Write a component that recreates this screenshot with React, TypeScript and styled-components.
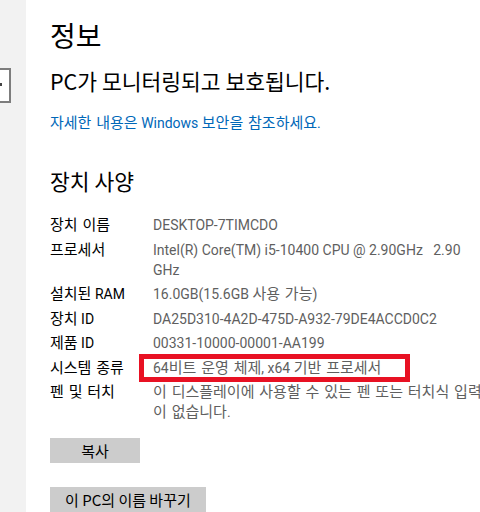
import React from "react";
import styled, { createGlobalStyle } from "styled-components";

const GlobalStyle = createGlobalStyle`
  html, body {
    margin: 0;
    padding: 0;
    background: #ffffff;
    overflow: hidden;
  }
  body {
    font-family: Roboto, "Noto Sans CJK KR", sans-serif;
    color: #000;
  }
`;

const Page = styled.div`
  display: flex;
  width: 560px;
  height: 512px;
`;

const Sidebar = styled.aside`
  flex: 0 0 26px;
  background: #f2f2f2;
  position: relative;
`;

const SearchBox = styled.div`
  position: absolute;
  left: -40px;
  top: 68px;
  width: 47px;
  height: 31px;
  border: 2px solid #7d7d7d;
  background: #ffffff;
`;

const SearchMark = styled.span`
  position: absolute;
  right: 7px;
  top: 13px;
  width: 2px;
  height: 3px;
  background: #444;
`;

const Main = styled.main`
  flex: 1;
  padding: 15px 0 0 24px;
  display: flex;
  flex-direction: column;
  align-items: flex-start;
`;

const Title = styled.h1`
  margin: 0;
  font-family: "Noto Sans CJK KR", sans-serif;
  font-size: 28px;
  font-weight: 400;
  line-height: 40px;
`;

const Status = styled.p`
  margin: 12px 0 0;
  font-family: "Noto Sans CJK KR", sans-serif;
  font-size: 21.5px;
  line-height: 28px;
`;

const Link = styled.a`
  margin-top: 18px;
  font-size: 14px;
  line-height: 20px;
  color: #0067b8;
  text-decoration: none;
`;

const SectionTitle = styled.h2`
  margin: 34px 0 0;
  font-family: "Noto Sans CJK KR", sans-serif;
  font-size: 21.5px;
  font-weight: 400;
  line-height: 28px;
`;

const SpecList = styled.dl`
  margin: 20px 0 0;
  display: grid;
  grid-template-columns: 103px 331px;
  row-gap: 4.5px;
  font-size: 14px;
  line-height: 20px;
`;

const Label = styled.dt`
  margin: 0;
  color: #000;
`;

const Value = styled.dd<{ $highlight?: boolean }>`
  margin: 0;
  color: #5f5f5f;
  white-space: pre-wrap;
  position: relative;
  ${(p) =>
    p.$highlight &&
    `
    &::after {
      content: "";
      position: absolute;
      left: -14px;
      top: -4px;
      width: 271px;
      height: 28px;
      box-sizing: border-box;
      border: 5px solid #e81123;
      pointer-events: none;
    }
  `}
`;

const Ko = styled.span`
  font-family: "Noto Sans CJK KR", sans-serif;
  font-size: 15px;
  line-height: 1;
  word-spacing: 1.5px;
`;

const Button = styled.button<{ $gap: number }>`
  margin-top: ${(p) => p.$gap}px;
  min-width: 90px;
  height: 30px;
  padding: 0 15px;
  border: none;
  background: #cccccc;
  color: #000;
  font-family: "Noto Sans CJK KR", sans-serif;
  font-size: 15px;
  line-height: 20px;
`;

const HANGUL_RUN = /([\uAC00-\uD7A3\u3131-\u318E]+(?: +[\uAC00-\uD7A3\u3131-\u318E]+)*)/;

function Mixed({ text }: { text: string }) {
  const parts = text.split(HANGUL_RUN);
  return (
    <>
      {parts.map((part, i) =>
        i % 2 === 1 ? <Ko key={i}>{part}</Ko> : part ? <React.Fragment key={i}>{part}</React.Fragment> : null
      )}
    </>
  );
}

const specs: { label: string; value: string; highlight?: boolean }[] = [
  { label: "장치 이름", value: "DESKTOP-7TIMCDO" },
  { label: "프로세서", value: "Intel(R) Core(TM) i5-10400 CPU @ 2.90GHz   2.90 GHz" },
  { label: "설치된 RAM", value: "16.0GB(15.6GB 사용 가능)" },
  { label: "장치 ID", value: "DA25D310-4A2D-475D-A932-79DE4ACCD0C2" },
  { label: "제품 ID", value: "00331-10000-00001-AA199" },
  { label: "시스템 종류", value: "64비트 운영 체제, x64 기반 프로세서", highlight: true },
  { label: "펜 및 터치", value: "이 디스플레이에 사용할 수 있는 펜 또는 터치식 입력이 없습니다." },
];

export default function App() {
  return (
    <>
      <GlobalStyle />
      <Page>
        <Sidebar>
          <SearchBox>
            <SearchMark />
          </SearchBox>
        </Sidebar>
        <Main>
          <Title>정보</Title>
          <Status>PC가 모니터링되고 보호됩니다.</Status>
          <Link href="#">
            <Mixed text="자세한 내용은 Windows 보안을 참조하세요." />
          </Link>
          <SectionTitle>장치 사양</SectionTitle>
          <SpecList>
            {specs.map((s) => (
              <React.Fragment key={s.label}>
                <Label>
                  <Mixed text={s.label} />
                </Label>
                <Value $highlight={s.highlight}>
                  <Mixed text={s.value} />
                </Value>
              </React.Fragment>
            ))}
          </SpecList>
          <Button $gap={16}>복사</Button>
          <Button $gap={24}>이 PC의 이름 바꾸기</Button>
        </Main>
      </Page>
    </>
  );
}
